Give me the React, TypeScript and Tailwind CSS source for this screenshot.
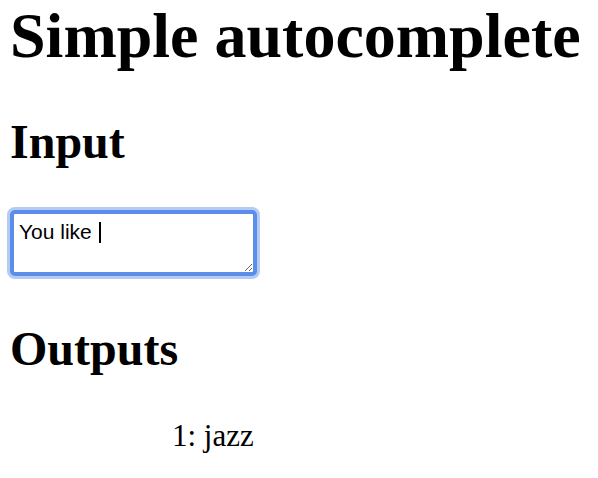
export default function App() {
  return (
    <div className="min-h-[478px] bg-white pl-[10px] text-black [font-family:'Liberation_Serif','Times_New_Roman',serif]">
      <h1 className="text-[64px] font-bold leading-[72px]">Simple autocomplete</h1>

      <h2 className="mt-[46px] text-[48px] font-bold leading-[48px]">Input</h2>

      <div className="relative mt-[44px] inline-block align-top">
        <textarea
          className="block h-[66px] w-[247px] rounded-[5px] border-4 border-[#5b8de9] bg-white pl-[5px] pt-[6px] text-[21px] leading-[24px] text-black shadow-[0_0_0_3px_#b3cbf5] outline-none [font-family:'Liberation_Sans',Arial,sans-serif]"
          defaultValue="You like "
          readOnly
        />
        <span className="absolute left-[89px] top-[12px] h-[21px] w-[2px] bg-black" />
      </div>

      <h2 className="mt-[49px] text-[48px] font-bold leading-[48px]">Outputs</h2>

      <p className="mt-[47px] pl-[162px] text-[31px] leading-[31px]">1: jazz</p>
    </div>
  )
}
